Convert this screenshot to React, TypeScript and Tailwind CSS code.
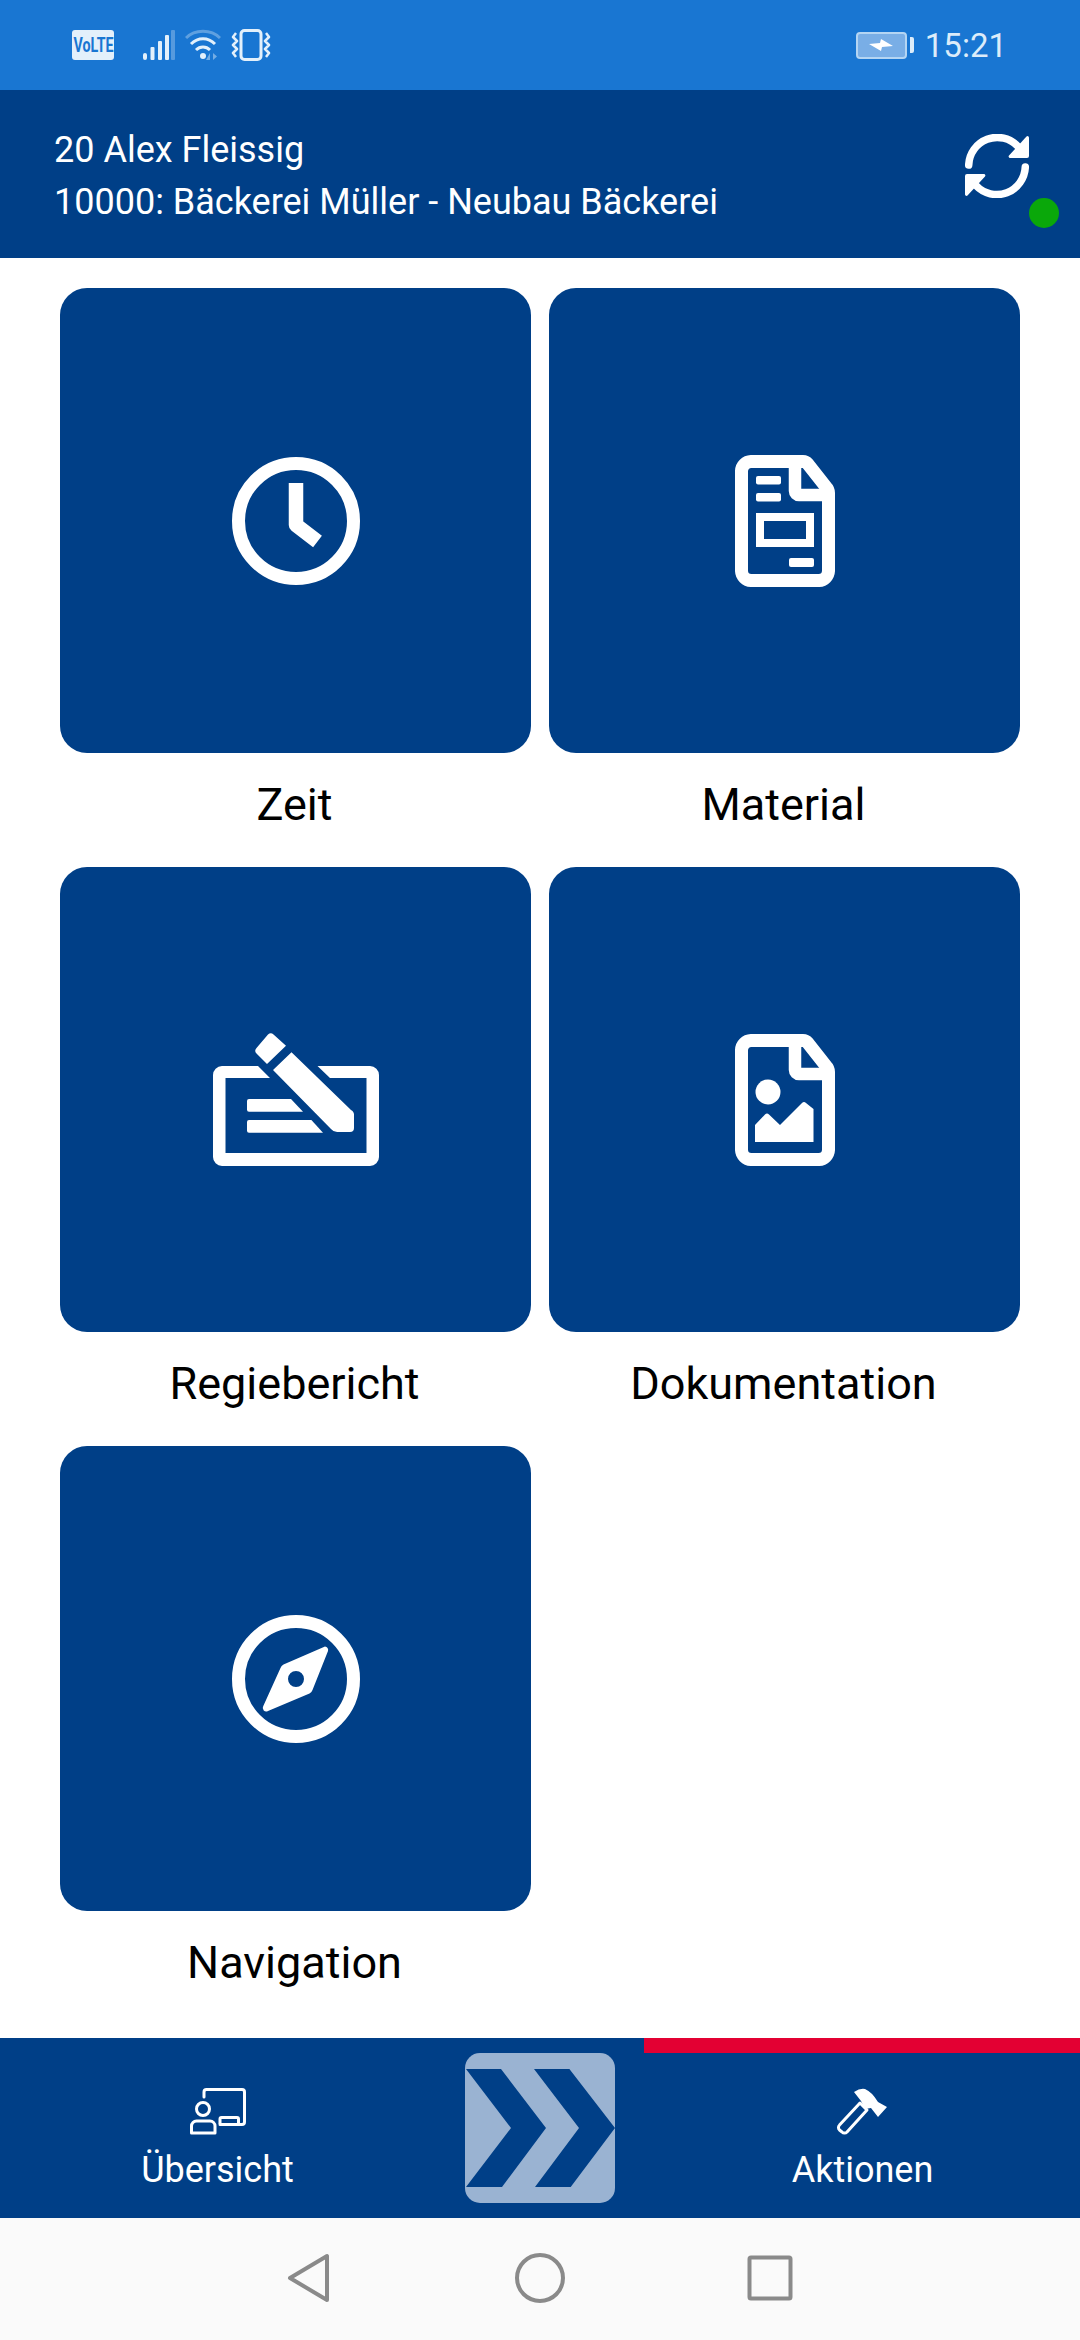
import React from 'react';

const outline =
  'M16 6.5H68a6 6 0 0 1 4.6 2.2L91 32a9 9 0 0 1 2.5 6V116a10 10 0 0 1-9.500 9.500H16A10 10 0 0 1 6.500 116V16A10 10 0 0 1 16 6.500Z';

function ClockIcon() {
  return (
    <svg width="128" height="128" viewBox="0 0 128 128" fill="none">
      <circle cx="64" cy="64" r="57.500" stroke="white" strokeWidth="13" />
      <path d="M64 26V68L85.500 84.500" stroke="white" strokeWidth="14.500" strokeLinejoin="round" />
    </svg>
  );
}

function MaterialIcon() {
  return (
    <svg width="100" height="132" viewBox="0 0 100 132" fill="none">
      <path d={outline} stroke="white" strokeWidth="13" strokeLinejoin="round" />
      <path d="M60 9V36a4 4 0 0 0 4 4H92" stroke="white" strokeWidth="12.500" />
      <rect x="21" y="21" width="25" height="8.500" rx="2" fill="white" />
      <rect x="21" y="38" width="25" height="8.500" rx="2" fill="white" />
      <rect x="25" y="62" width="50" height="26" stroke="white" strokeWidth="8" />
      <rect x="54" y="103" width="25" height="9" rx="2" fill="white" />
    </svg>
  );
}

function RegieIcon() {
  return (
    <svg width="166" height="133" viewBox="0 0 166 133" fill="white">
      <path d="M45 33H9a9 9 0 0 0-9 9V124a9 9 0 0 0 9 9H157a9 9 0 0 0 9-9V42a9 9 0 0 0-9-9H104.500L117 45H153.500V120H12.500V45H57Z" />
      <path d="M55 1.500a4 4 0 0 1 5.500 0L73 12.700 54 31 43.500 20.500a4 4 0 0 1 0-5.500Z" />
      <path d="M78.500 19.300L138 77a6 6 0 0 1 3 6V95a4 4 0 0 1-4 4H125a8 8 0 0 1-7-3L60 37Z" />
      <path d="M36 66H78L90 78.700H36a2 2 0 0 1-2-2V68a2 2 0 0 1 2-2Z" />
      <path d="M36 87H98.400L110 99.700H36a2 2 0 0 1-2-2V89a2 2 0 0 1 2-2Z" />
    </svg>
  );
}

function DokuIcon() {
  return (
    <svg width="100" height="132" viewBox="0 0 100 132" fill="none">
      <path d={outline} stroke="white" strokeWidth="13" strokeLinejoin="round" />
      <path d="M60 9V36a4 4 0 0 0 4 4H92" stroke="white" strokeWidth="12.500" />
      <ellipse cx="33" cy="58" rx="12.500" ry="12.500" fill="white" />
      <path d="M20 91L30 80.500a3 3 0 0 1 4 0L45 91 67 69a3 3 0 0 1 4 0L78.500 75V108H20Z" fill="white" />
    </svg>
  );
}

function CompassIcon() {
  return (
    <svg width="128" height="128" viewBox="0 0 128 128" fill="none">
      <circle cx="64" cy="64" r="57.500" stroke="white" strokeWidth="13" />
      <path
        fillRule="evenodd"
        clipRule="evenodd"
        d="M93 31.500a3.500 3.500 0 0 1 3 4.500L80.500 75a6 6 0 0 1-3 3.500L36 96a3.500 3.500 0 0 1-4.800-4.800L48.500 53a6 6 0 0 1 3-3.500ZM64 56a8 8 0 1 0 0 16 8 8 0 0 0 0-16Z"
        fill="white"
      />
    </svg>
  );
}

function SyncIcon() {
  return (
    <svg width="64" height="64" viewBox="0 0 64 64" fill="none">
      <path d="M3.700 31A28.500 28.500 0 0 1 53 12.500" stroke="white" strokeWidth="7.500" strokeLinecap="round" />
      <path d="M60.300 33A28.500 28.500 0 0 1 11 51.500" stroke="white" strokeWidth="7.500" strokeLinecap="round" />
      <path d="M61.500 2.500a1.500 1.500 0 0 1 2.500 1V22a2 2 0 0 1-2 2H45a1.500 1.500 0 0 1-1-2.500Z" fill="white" />
      <path d="M2.500 61.500a1.500 1.500 0 0 1-2.500-1V42a2 2 0 0 1 2-2H19a1.500 1.500 0 0 1 1 2.500Z" fill="white" />
    </svg>
  );
}

function Tile(props: { label: string; icon: React.ReactNode }) {
  return (
    <div className="flex flex-col">
      <div className="flex h-[465px] items-center justify-center rounded-[27px] bg-[#003f87]">{props.icon}</div>
      <div className="flex h-[114px] items-center justify-center pb-[12px] pr-[2px] text-[45px] leading-none text-black">
        {props.label}
      </div>
    </div>
  );
}

function StatusBar() {
  return (
    <div className="flex h-[90px] items-center justify-between bg-[#1976d2] pl-[72px] pr-[73px] text-[#dcecfa]">
      <div className="flex items-center">
        <div className="flex h-[30px] w-[42px] items-center justify-center overflow-hidden rounded-[3px] bg-[#e3f0fb] text-[#1976d2]">
          <span className="scale-x-[0.68] text-[21px] font-bold leading-none">VoLTE</span>
        </div>
        <svg className="ml-[29px]" width="32" height="30" viewBox="0 0 32 30" fill="#e3f0fb">
          <rect x="0" y="23" width="4" height="7" rx="2" />
          <rect x="7.500" y="17" width="4" height="13" rx="1" />
          <rect x="15" y="11" width="4" height="19" rx="1" />
          <rect x="22" y="5" width="4" height="25" rx="1" />
          <rect x="28" y="0" width="4" height="30" rx="1" fillOpacity="0.3" />
        </svg>
        <svg className="ml-[10px]" width="36" height="32" viewBox="0 0 36 32" fill="none" stroke="#e3f0fb">
          <path d="M1 9C10 0 26 0 35 9" strokeWidth="3" strokeOpacity="0.35" />
          <path d="M6 15C13 8 23 8 30 15" strokeWidth="3" />
          <path d="M11 21C15 17 21 17 25 21" strokeWidth="3" />
          <circle cx="18" cy="27" r="3" fill="#e3f0fb" stroke="none" />
          <path d="M25 31V24L21 31M28 24V31L32 27.500Z" fill="#e3f0fb" fillOpacity="0.45" stroke="none" />
        </svg>
        <svg className="ml-[10px]" width="40" height="32" viewBox="0 0 40 32" fill="none" stroke="#e3f0fb">
          <rect x="10" y="1.500" width="20" height="29" rx="3.500" strokeWidth="3" />
          <path
            d="M5 4L2 8 6 12 2 16 6 20 2 24 5 28M35 4L38 8 34 12 38 16 34 20 38 24 35 28"
            strokeWidth="2.500"
            strokeLinejoin="round"
          />
        </svg>
      </div>
      <div className="flex items-center">
        <div className="flex h-[27px] w-[51px] items-center justify-center rounded-[4px] border-2 border-[#b4d5f3] bg-[#79aee6]">
          <svg width="24" height="12" viewBox="0 0 24 12" fill="white">
            <path d="M0 5L11 4 12 0 24 7 13 8 12 12Z" />
          </svg>
        </div>
        <div className="ml-[3px] h-[16px] w-[4px] rounded-r-[2px] bg-[#dcecfa]" />
        <div className="ml-[11px] text-[33px] leading-none">15:21</div>
      </div>
    </div>
  );
}

function Header() {
  return (
    <div className="flex h-[168px] items-start justify-between bg-[#003f87] pl-[54px] text-[36px] leading-[52px] text-white">
      <div className="pt-[34px]">
        <div>20 Alex Fleissig</div>
        <div>10000: Bäckerei Müller - Neubau Bäckerei</div>
      </div>
      <div className="relative mr-[51px] mt-[44px] h-[64px] w-[64px]">
        <SyncIcon />
        <div className="absolute left-[64px] top-[64px] h-[30px] w-[30px] rounded-full bg-[#0aa80a]" />
      </div>
    </div>
  );
}

function BottomNav() {
  return (
    <div className="relative grid h-[180px] grid-cols-[435px_210px_435px] bg-[#003f87] text-[36px] leading-none text-white">
      <div className="absolute right-0 top-0 h-[15px] w-[436px] bg-[#e30033]" />
      <div className="flex flex-col items-center pt-[50px]">
        <svg width="58" height="48" viewBox="0 0 58 48" fill="none" stroke="white" strokeWidth="3">
          <path d="M15 9V4a2.500 2.500 0 0 1 2.500-2.500H53a2.500 2.500 0 0 1 2.500 2.500V34a2.500 2.500 0 0 1-2.500 2.500H31" strokeLinecap="round" />
          <path d="M31 36V31a1.500 1.500 0 0 1 1.500-1.500H48a1.500 1.500 0 0 1 1.500 1.500V36" />
          <circle cx="14" cy="21" r="6.500" />
          <path d="M2.500 45V38a5 5 0 0 1 5-5H21a5 5 0 0 1 5 5V45Z" strokeLinejoin="round" />
        </svg>
        <div className="mt-[16px]">Übersicht</div>
      </div>
      <div className="flex justify-center pt-[15px]">
        <svg width="150" height="150" viewBox="0 0 150 150">
          <rect width="150" height="150" rx="15" fill="#9ab3d2" />
          <path d="M1 16H36L81 75 37 134H1L46 75Z" fill="#003f87" />
          <path d="M69 16H104.400L150 75 105.700 134H70L114 75Z" fill="#003f87" />
        </svg>
      </div>
      <div className="flex flex-col items-center pt-[50px]">
        <svg width="54" height="48" viewBox="0 0 54 48" fill="none" stroke="white" strokeWidth="3" strokeLinejoin="round">
          <path d="M24 15L31 22 11 44a3.500 3.500 0 0 1-5 0L3.500 42a3.500 3.500 0 0 1 0-5Z" />
          <path d="M18 4Q24 0 29 1 36 4 42 14L51 19 42 29 35 20 29 21 25 13Z" fill="white" stroke="none" />
        </svg>
        <div className="mt-[16px]">Aktionen</div>
      </div>
    </div>
  );
}

function SystemNav() {
  return (
    <div className="flex h-[122px] items-start bg-[#fafafa] pl-[287px] pt-[34px]">
      <svg width="44" height="52" viewBox="0 0 44 52" fill="none" stroke="#8a8a8a" strokeWidth="4" strokeLinejoin="round">
        <path d="M40 4V48L3 26Z" />
      </svg>
      <svg className="ml-[183px]" width="52" height="52" viewBox="0 0 52 52" fill="none" stroke="#8a8a8a" strokeWidth="4">
        <circle cx="26" cy="26" r="23" />
      </svg>
      <svg className="ml-[181px] mt-[3px]" width="46" height="46" viewBox="0 0 46 46" fill="none" stroke="#8a8a8a" strokeWidth="4">
        <rect x="2.500" y="2.500" width="41" height="41" rx="1.500" />
      </svg>
    </div>
  );
}

export default function App() {
  return (
    <div className="flex h-[2340px] w-[1080px] flex-col overflow-hidden bg-white font-['Roboto',sans-serif]">
      <StatusBar />
      <Header />
      <div className="flex-1">
        <div className="grid grid-cols-[471px_471px] gap-x-[18px] pl-[60px] pt-[30px]">
          <Tile label="Zeit" icon={<ClockIcon />} />
          <Tile label="Material" icon={<MaterialIcon />} />
          <Tile label="Regiebericht" icon={<RegieIcon />} />
          <Tile label="Dokumentation" icon={<DokuIcon />} />
          <Tile label="Navigation" icon={<CompassIcon />} />
        </div>
      </div>
      <BottomNav />
      <SystemNav />
    </div>
  );
}
